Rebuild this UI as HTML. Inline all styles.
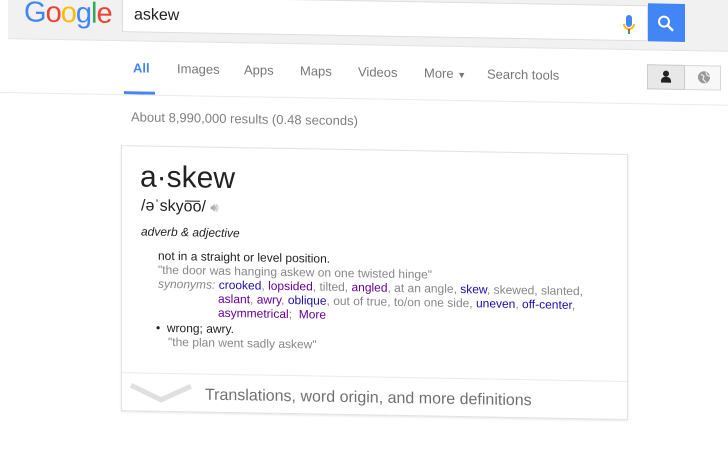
<!DOCTYPE html>
<html><head><meta charset="utf-8"><style>
body{margin:0;width:728px;height:418px;overflow:hidden;background:#fff;font-family:"Liberation Sans",Arial,sans-serif;}
#p{position:absolute;left:0;top:0;width:760px;height:440px;transform:skewY(1deg);transform-origin:0 0;}
.a{position:absolute;white-space:nowrap}
.hd{position:absolute;left:8px;top:-20px;width:760px;height:58px;background:#f1f1f1;border-bottom:1px solid #e4e4e4}
.nav{font-size:13px;color:#777;top:58px}
.l{color:#660099}.b{color:#1a0dab}
.g{color:#878787}
</style></head><body><div id="p">
<div class="hd"></div>
<div class="a" style="left:24px;top:-4px;font-size:29px;letter-spacing:-1px"><span style="color:#4285f4">G</span><span style="color:#ea4335">o</span><span style="color:#fbbc05">o</span><span style="color:#4285f4">g</span><span style="color:#34a853">l</span><span style="color:#ea4335">e</span></div>
<div class="a" style="left:122px;top:-6px;width:526px;height:36px;background:#fff;border:1px solid #ddd;box-sizing:border-box"></div>
<div class="a" style="left:134px;top:4px;font-size:16px;color:#222">askew</div>
<svg class="a" style="left:622px;top:3px" width="14" height="22" viewBox="0 0 14 22"><rect x="4" y="1" width="6" height="12" rx="3" fill="#4285f4"/><path d="M2 10a5 5 0 0 0 10 0" stroke="#fbbc05" stroke-width="2" fill="none"/><rect x="6" y="15" width="2" height="5" fill="#34a853"/><rect x="6" y="15" width="2" height="2" fill="#ea4335"/></svg>
<div class="a" style="left:648px;top:-8px;width:37px;height:38px;background:#4285f4"></div>
<svg class="a" style="left:657px;top:3px" width="18" height="18" viewBox="0 0 18 18"><circle cx="7" cy="7" r="5" stroke="#fff" stroke-width="2" fill="none"/><path d="M11 11l5 5" stroke="#fff" stroke-width="2.4"/></svg>
<div class="a nav" style="left:133px;color:#4285f4;font-weight:bold">All</div>
<div class="a nav" style="left:177px">Images</div>
<div class="a nav" style="left:244px">Apps</div>
<div class="a nav" style="left:300px">Maps</div>
<div class="a nav" style="left:358px">Videos</div>
<div class="a nav" style="left:424px">More <span style="font-size:9px">▼</span></div>
<div class="a nav" style="left:487px">Search tools</div>
<div class="a" style="left:124px;top:89px;width:31px;height:3px;background:#4285f4"></div>
<div class="a" style="left:0;top:92px;width:760px;height:1px;background:#ebebeb"></div>
<div class="a" style="left:647px;top:53px;width:74px;height:25px;border:1px solid #d8d8d8;box-sizing:border-box;background:#f8f8f8"></div>
<div class="a" style="left:647px;top:53px;width:38px;height:25px;background:#e8e8e8;border:1px solid #ccc;box-sizing:border-box"></div>
<svg class="a" style="left:659px;top:58px" width="14" height="14" viewBox="0 0 14 14"><circle cx="7" cy="4" r="3" fill="#222"/><path d="M2 13v-2a5 4 0 0 1 10 0v2z" fill="#222"/></svg>
<svg class="a" style="left:697px;top:58px" width="14" height="14" viewBox="0 0 14 14"><circle cx="7" cy="7" r="6" fill="#999"/><path d="M4 4l3 2-1 3 3 3M9 2l1 3 3 1" stroke="#eee" stroke-width="1.2" fill="none"/></svg>
<div class="a" style="left:131px;top:107px;font-size:13px;color:#808080">About 8,990,000 results (0.48 seconds)</div>
<div class="a" style="left:121px;top:143px;width:507px;height:266px;border:1px solid #e2e2e2;box-shadow:0 1px 2px rgba(0,0,0,.1);box-sizing:border-box"></div>
<div class="a" style="left:122px;top:370px;width:505px;height:1px;background:#ebebeb"></div>
<div class="a" style="left:140px;top:158px;font-size:30px;color:#222">a·skew</div>
<div class="a" style="left:141px;top:195px;font-size:16px;color:#222">/əˈskyo͞o/ <span style="color:#aaa;font-size:13px">🔊︎</span></div>
<div class="a" style="left:141px;top:222px;font-size:12px;color:#222;font-style:italic">adverb &amp; adjective</div>
<div class="a" style="left:158px;top:246px;font-size:12px;color:#222">not in a straight or level position.</div>
<div class="a g" style="left:158px;top:260px;font-size:12px">"the door was hanging askew on one twisted hinge"</div>
<div class="a" style="left:158px;top:274px;font-size:12px;color:#878787"><i>synonyms:</i> <span class="b">crooked</span>, <span class="l">lopsided</span>, tilted, <span class="l">angled</span>, at an angle, <span class="b">skew</span>, skewed, slanted,</div>
<div class="a" style="left:218px;top:288px;font-size:12px;color:#878787"><span class="l">aslant</span>, <span class="l">awry</span>, <span class="b">oblique</span>, out of true, to/on one side, <span class="b">uneven</span>, <span class="b">off-center</span>,</div>
<div class="a" style="left:218px;top:302px;font-size:12px;color:#878787"><span class="l">asymmetrical</span>;&nbsp; <span class="l">More</span></div>
<div class="a" style="left:156px;top:318px;font-size:12px;color:#222">•&nbsp; wrong; awry.</div>
<div class="a g" style="left:168px;top:332px;font-size:12px">"the plan went sadly askew"</div>
<svg class="a" style="left:130px;top:380px" width="62" height="20" viewBox="0 0 62 20"><path d="M1 3l30 14 30-14" stroke="#e0e0e0" stroke-width="5" fill="none"/></svg>
<div class="a" style="left:205px;top:383px;font-size:16px;color:#707070">Translations, word origin, and more definitions</div>
</div></body></html>
